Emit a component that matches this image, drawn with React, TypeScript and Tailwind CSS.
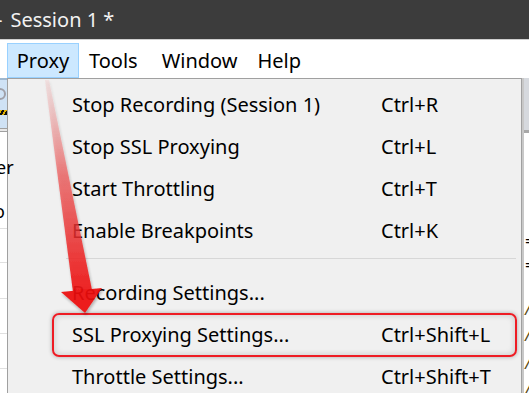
import React from "react";

const items: [string, string][] = [
  ["Stop Recording (Session 1)", "Ctrl+R"],
  ["Stop SSL Proxying", "Ctrl+L"],
  ["Start Throttling", "Ctrl+T"],
  ["Enable Breakpoints", "Ctrl+K"],
];

const items2: [string, string][] = [
  ["Recording Settings...", ""],
  ["SSL Proxying Settings...", "Ctrl+Shift+L"],
  ["Throttle Settings...", "Ctrl+Shift+T"],
];

function Row({ label, keys }: { label: string; keys: string }) {
  return (
    <div className="flex h-[42px] items-center">
      <div className="w-[373px] pl-[64px]">{label}</div>
      <div>{keys}</div>
    </div>
  );
}

export default function App() {
  return (
    <div
      className="relative h-[393px] w-[529px] overflow-hidden bg-white text-[20px] text-black"
      style={{ fontFamily: '"Noto Sans", "Open Sans", sans-serif' }}
    >
      {/* title bar */}
      <div className="flex h-[39px] items-center bg-[#3c3c3c] text-[#f2f2f2]">
        <span className="ml-[-4px] mr-[8px]">-</span>
        <span>Session 1 *</span>
      </div>
      {/* menu bar */}
      <div className="flex h-[39px] items-end border-t border-[#cfcfcf] bg-white">
        <div className="ml-[7px] flex h-[35px] w-[72px] items-center justify-center border border-[#99d1ff] bg-[#cce8ff]">
          Proxy
        </div>
        <div className="ml-[10px] flex h-[35px] items-center">Tools</div>
        <div className="ml-[24px] flex h-[35px] items-center">Window</div>
        <div className="ml-[20px] flex h-[35px] items-center">Help</div>
      </div>

      <div className="flex h-[316px]">
        {/* left strip of app behind */}
        <div className="flex w-[7px] flex-col">
          <div className="h-[2px] bg-[#9fb8d0]" />
          <div className="relative h-[48px] bg-[#cfe2f5]">
            <div className="absolute left-[-6px] top-[8px] h-[12px] w-[12px] rounded-full border-2 border-[#a0a0a8]" />
            <div className="absolute left-0 top-[30px] h-[5px] w-[7px] bg-[repeating-linear-gradient(120deg,#e0b000_0px,#e0b000_2px,#101010_2px,#101010_4px)]" />
          </div>
          <div className="h-[4px] border-y border-[#a0a0a0] bg-[#e8e8e8]" />
          <div className="relative flex-1 bg-white">
            <span className="absolute left-[-4px] top-[22px] text-[18px]">er</span>
            <span className="absolute left-[-6px] top-[66px] text-[18px]">o</span>
            <div className="absolute top-[96px] h-px w-full bg-[#e0e0e0]" />
            <div className="absolute top-[130px] h-px w-full bg-[#e0e0e0]" />
            <div className="absolute top-[166px] h-px w-full bg-[#e0e0e0]" />
            <div className="absolute top-[201px] h-px w-full bg-[#e0e0e0]" />
            <div className="absolute top-[236px] h-px w-full bg-[#e0e0e0]" />
          </div>
        </div>

        {/* dropdown menu */}
        <div className="w-[515px] border border-b-0 border-[#a0a0a0] bg-[#f0f0f0] pt-[5px]">
          {items.map(([l, k]) => (
            <Row key={l} label={l} keys={k} />
          ))}
          <div className="h-[20px] pl-[58px] pr-[5px] pt-[6px]">
            <div className="h-px bg-[#d7d7d7]" />
          </div>
          {items2.map(([l, k]) => (
            <Row key={l} label={l} keys={k} />
          ))}
        </div>

        {/* right strip */}
        <div className="flex flex-1 flex-col border-l-2 border-[#c8c8c8]">
          <div className="h-[52px] bg-[#d6d9de]" />
          <div className="h-[3px] bg-[#a8a8a8]" />
          <div className="relative flex-1 bg-white text-[16px]">
            <span className="absolute left-[1px] top-[100px] leading-none">=</span>
            <span className="absolute left-[1px] top-[124px] leading-none">=</span>
            <span className="absolute left-[1px] top-[168px] italic leading-none text-[#5a4a10]">/</span>
            <span className="absolute left-[1px] top-[194px] italic leading-none text-[#5a4a10]">/</span>
            <span className="absolute left-[1px] top-[222px] italic leading-none text-[#5a4a10]">/</span>
            <span className="absolute left-[1px] top-[248px] italic leading-none text-[#5a4a10]">/</span>
          </div>
        </div>
      </div>

      {/* red highlight box */}
      <div className="absolute left-[52px] top-[313px] h-[44px] w-[465px] rounded-[7px] border-2 border-[#ee1c24] shadow-[0_0_4px_rgba(0,0,0,0.3),inset_0_0_6px_rgba(0,0,0,0.18)]" />

      {/* arrow */}
      <svg className="pointer-events-none absolute left-0 top-0" width="529" height="393">
        <defs>
          <linearGradient id="shaft" x1="0" y1="80" x2="0" y2="292" gradientUnits="userSpaceOnUse">
            <stop offset="0" stopColor="#f4b0b0" stopOpacity="0.25" />
            <stop offset="0.45" stopColor="#ee5050" stopOpacity="0.75" />
            <stop offset="1" stopColor="#ec1010" stopOpacity="1" />
          </linearGradient>
          <filter id="sh" x="-20%" y="-20%" width="140%" height="140%">
            <feDropShadow dx="1" dy="2" stdDeviation="1.5" floodColor="#000" floodOpacity="0.3" />
          </filter>
        </defs>
        <g filter="url(#sh)" opacity="0.93">
          <polygon points="45,80 49,80 92,290 73,292" fill="url(#shaft)" />
          <polygon points="61,292 102,288 85,313" fill="#ec1010" />
        </g>
      </svg>
    </div>
  );
}
